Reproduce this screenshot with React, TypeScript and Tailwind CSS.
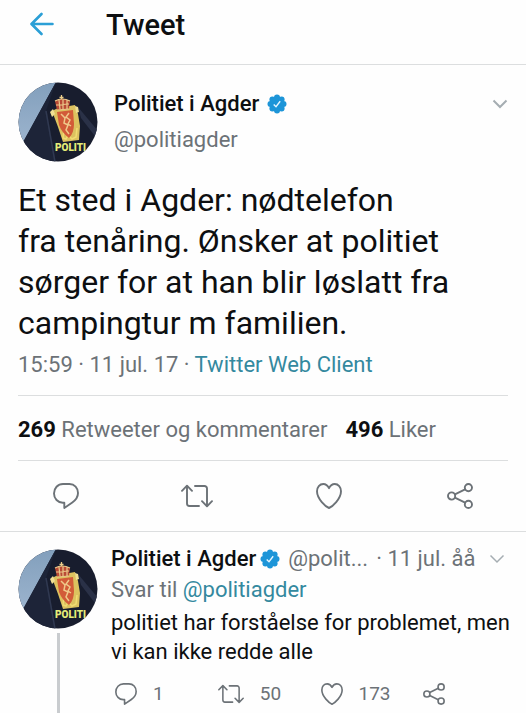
import { useId } from "react";
import type { ReactNode } from "react";

interface IconProps {
  className?: string;
}

interface ActionProps {
  label: string;
  count?: number;
  children: ReactNode;
}

const iconStroke = {
  fill: "none",
  stroke: "currentColor",
  strokeLinecap: "round",
  strokeLinejoin: "round",
} as const;

function BackIcon() {
  return (
    <svg viewBox="0 0 24 24" className="h-6 w-6" {...iconStroke} strokeWidth={2.6} aria-hidden="true">
      <path d="M22.500 12H2M11.500 2L1.500 12l10 10" />
    </svg>
  );
}

function ChevronIcon({ className }: IconProps) {
  return (
    <svg viewBox="0 0 16 10" className={className} fill="none" stroke="currentColor" aria-hidden="true">
      <path d="M1.500 1.500L8 8l6.500-6.500" />
    </svg>
  );
}

function ReplyIcon({ className }: IconProps) {
  return (
    <svg viewBox="0 0 26 26" className={className} {...iconStroke} strokeWidth={1.9} aria-hidden="true">
      <path d="M10 1h6.500C21.500 1 25 5 25 10c0 4-2.200 7-5.700 9.500L11.300 25v-5.300H9.800C4.800 19.700 1 15.600 1 10.500 1 5.200 4.800 1 10 1z" />
    </svg>
  );
}

function RetweetIcon({ className }: IconProps) {
  return (
    <svg viewBox="0 0 32 24" className={className} {...iconStroke} strokeWidth={1.9} aria-hidden="true">
      <path d="M1 6.800L6 1.700l5 5.100M6 2v17.500a2.500 2.500 0 0 0 2.500 2.500H18" />
      <path d="M14 2h9.500A2.500 2.500 0 0 1 26 4.500V22M21 17.200l5 5.100 5-5.100" />
    </svg>
  );
}

function HeartIcon({ className }: IconProps) {
  return (
    <svg viewBox="0 0 26 26" className={className} {...iconStroke} strokeWidth={1.9} aria-hidden="true">
      <path d="M13 5.200C11.700 2.500 9.700 1 7.300 1 3.700 1 1 4 1 8.300c0 7.700 8.800 15.400 12 16.700 3.200-1.300 12-9 12-16.700C25 4 22.300 1 18.700 1 16.300 1 14.300 2.500 13 5.200z" />
    </svg>
  );
}

function ShareIcon({ className }: IconProps) {
  return (
    <svg viewBox="0 0 26 26" className={className} {...iconStroke} strokeWidth={1.9} aria-hidden="true">
      <circle cx="4.600" cy="13" r="3.600" />
      <circle cx="21.400" cy="4.600" r="3.600" />
      <circle cx="21.400" cy="21.400" r="3.600" />
      <path d="M7.900 11.300l10.200-5M7.900 14.700l10.200 5" />
    </svg>
  );
}

function VerifiedIcon() {
  return (
    <svg viewBox="0 0 20 20" className="h-5 w-5 shrink-0" role="img" aria-label="Verifisert">
      <g fill="#1d95d8">
        <circle cx="10" cy="10" r="7.500" />
        <circle cx="10" cy="3.500" r="3" />
        <circle cx="14.600" cy="5.400" r="3" />
        <circle cx="16.500" cy="10" r="3" />
        <circle cx="14.600" cy="14.600" r="3" />
        <circle cx="10" cy="16.500" r="3" />
        <circle cx="5.400" cy="14.600" r="3" />
        <circle cx="3.500" cy="10" r="3" />
        <circle cx="5.400" cy="5.400" r="3" />
      </g>
      <path d="M6.700 10.400l2.300 2.300 4.200-5.400" fill="none" stroke="#e6f6ff" strokeWidth="1.400" />
    </svg>
  );
}

function Avatar() {
  const id = useId();
  return (
    <svg viewBox="0 0 80 80" className="h-20 w-20 shrink-0" role="img" aria-label="Politiet i Agder">
      <defs>
        <clipPath id={`${id}-clip`}>
          <circle cx="40" cy="40" r="39.500" />
        </clipPath>
        <linearGradient id={`${id}-sky`} x1="0" y1="0" x2="0" y2="1">
          <stop offset="0" stopColor="#829fbc" />
          <stop offset="1" stopColor="#9bb3cd" />
        </linearGradient>
      </defs>
      <g clipPath={`url(#${id}-clip)`}>
        <rect width="80" height="80" fill="#181d2e" />
        <path d="M0 0h38L6 59H0z" fill={`url(#${id}-sky)`} />
        <path d="M38 0L28 29l9 51H14L5 60z" fill="#1d2438" />
        <path d="M28 29l9 51" stroke="#303951" strokeWidth="1.500" />
        <path d="M60 25l20 24v9L63 36z" fill="#2a3147" />

        {/* Gold backing of the crest */}
        <path d="M34 29l6-3 17-3 3 9 2 12-1 14-16 2-5-15z" fill="#dcc25f" />
        <path d="M32 30l3-3 2 5-3 3zM57 24l3 1 1 5-3 1z" fill="#f0df94" />
        <path d="M46 48l-1 8 3 1 2-4 4 4 4-2 1-9" fill="none" stroke="#f1dc72" strokeWidth="1.500" />

        {/* Crown */}
        <path d="M43.500 13v5M41.500 15.500h4" stroke="#edcf8b" strokeWidth="1.300" />
        <path d="M37 19q7-4 15 0l-1 8-12 1z" fill="#b94a35" />
        <path d="M37 19q7-4 15 0M38 23l13-1M39 28l12-1M41 18l1 9M45 17v10M49 18v9" fill="none" stroke="#ebc98a" strokeWidth="1.200" />

        {/* Shield with the lion */}
        <path d="M39 30l16-2 1 14q0 9-5 14-7-5-10-13z" fill="#d25b38" />
        <path d="M43 32l4 4-1 5 4 2-2 5 3 4M51 31l-3 4 4 3-2 4 3 2" fill="none" stroke="#efc889" strokeWidth="1.500" />

        <text x="37" y="69" fill="#e6ec79" fontFamily="Roboto, sans-serif" fontSize="10" fontWeight="900">
          POLITI
        </text>
      </g>
    </svg>
  );
}

function Action({ label, count, children }: ActionProps) {
  return (
    <button type="button" aria-label={label} className="flex items-center gap-4">
      {children}
      {count !== undefined && <span>{count}</span>}
    </button>
  );
}

function MainTweet() {
  return (
    <article className="border-b border-[#dcdedf]">
      <div className="px-[18px] pt-[17px]">
        <div className="flex items-center">
          <Avatar />
          <div className="ml-4 flex-1 text-[22px] leading-9">
            <div className="flex items-center gap-2 font-medium">
              <h2>Politiet i Agder</h2>
              <VerifiedIcon />
              <button type="button" aria-label="Mer" className="ml-auto text-[#a5adb2]">
                <ChevronIcon className="h-[10px] w-4 stroke-2" />
              </button>
            </div>
            <p className="text-[#6c7277]">@politiagder</p>
          </div>
        </div>

        <p className="mt-[18px] text-[32px] leading-[41px]">
          Et sted i Agder: nødtelefon
          <br />
          fra tenåring. Ønsker at politiet sørger for at han blir løslatt fra campingtur m familien.
        </p>
        <p className="mt-[3px] pb-3 text-[22px] leading-9 text-[#6c7277]">
          15:59 · 11 jul. 17 ·{" "}
          <a href="#client" className="text-[#34899f]">
            Twitter Web Client
          </a>
        </p>

        <div className="flex gap-[18px] border-y border-[#dcdedf] pt-1 text-[22px] leading-[60px] text-[#6c7277]">
          <p>
            <strong className="text-[#0d0f11]">269</strong> Retweeter og kommentarer
          </p>
          <p>
            <strong className="text-[#0d0f11]">496</strong> Liker
          </p>
        </div>
      </div>

      <div className="grid h-[70px] grid-cols-4 place-items-center text-[#6c7277]">
        <Action label="Svar">
          <ReplyIcon className="h-[26px] w-[26px]" />
        </Action>
        <Action label="Retweet">
          <RetweetIcon className="h-6 w-8" />
        </Action>
        <Action label="Lik">
          <HeartIcon className="h-[26px] w-[26px]" />
        </Action>
        <Action label="Del">
          <ShareIcon className="h-[26px] w-[26px]" />
        </Action>
      </div>
    </article>
  );
}

function ReplyTweet() {
  return (
    <article className="flex flex-1 pl-[18px]">
      <div className="flex flex-col items-center pt-[17px]">
        <Avatar />
        <div className="mt-1 w-[3px] flex-1 bg-[#c9cccf]" />
      </div>

      <div className="ml-[13px] min-w-0 flex-1 pt-3">
        <div className="flex items-center whitespace-nowrap pr-[21px] text-[22px] leading-[30px] text-[#6c7277]">
          <h2 className="mr-1 font-medium text-[#0d0f11]">Politiet i Agder</h2>
          <VerifiedIcon />
          <span className="ml-2">@polit...</span>
          <span className="ml-2">· 11 jul. åå</span>
          <button type="button" aria-label="Mer" className="ml-auto text-[#a5adb2]">
            <ChevronIcon className="h-[10px] w-4 stroke-[1.5]" />
          </button>
        </div>
        <p className="text-[22px] leading-8 text-[#6c7277]">
          Svar til{" "}
          <a href="#politiagder" className="text-[#34899f]">
            @politiagder
          </a>
        </p>
        <p className="mt-0.5 pr-3 text-[22px] leading-[29px]">
          politiet har forståelse for problemet, men vi kan ikke redde alle
        </p>

        <div className="mt-2 grid grid-cols-4 py-2 pl-1 text-[19px] leading-6 text-[#6c7277]">
          <Action label="Svar" count={1}>
            <ReplyIcon className="h-[22px] w-[22px]" />
          </Action>
          <Action label="Retweet" count={50}>
            <RetweetIcon className="h-5 w-[26px]" />
          </Action>
          <Action label="Lik" count={173}>
            <HeartIcon className="h-[22px] w-[22px]" />
          </Action>
          <Action label="Del">
            <ShareIcon className="h-[22px] w-[22px]" />
          </Action>
        </div>
      </div>
    </article>
  );
}

export default function App() {
  return (
    <main className="flex min-h-screen flex-col bg-[#fefefe] font-['Roboto',sans-serif] text-[#0d0f11]">
      <header className="flex h-[65px] items-start border-b border-[#dcdedf] pl-[30px] pt-1">
        <button type="button" aria-label="Tilbake" className="flex h-10 items-center text-[#2b9fd6]">
          <BackIcon />
        </button>
        <h1 className="ml-[52px] text-[29px] font-medium leading-[42px]">Tweet</h1>
      </header>
      <MainTweet />
      <ReplyTweet />
    </main>
  );
}
